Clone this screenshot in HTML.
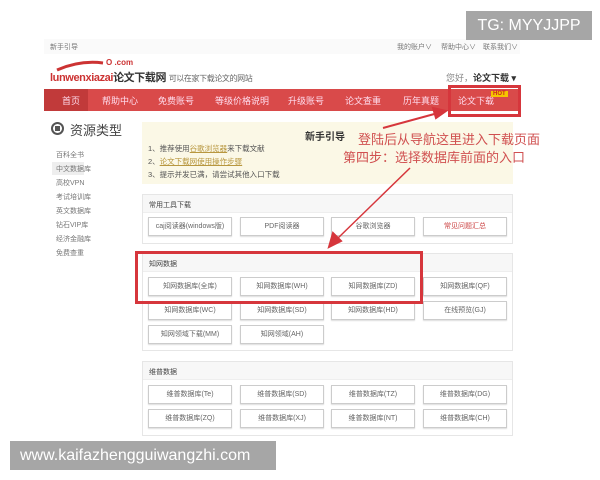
<!DOCTYPE html>
<html><head><meta charset="utf-8"><style>
*{margin:0;padding:0;box-sizing:border-box}
body{width:600px;height:480px;background:#fff;position:relative;overflow:hidden;font-family:"Liberation Sans","Noto Sans CJK SC",sans-serif;color:#555}
.a{position:absolute;white-space:nowrap}
.s{font-size:7px;color:#777}
.nav{position:absolute;left:44px;top:89px;width:476px;height:22px;background:#d94a4a}
.nav span{position:absolute;top:5px;font-size:9px;color:#fde}
.panel{position:absolute;left:142px;width:371px;border:1px solid #e6e6e6;background:#fff}
.ph{height:18px;background:#f7f7f7;border-bottom:1px solid #eee;font-size:7px;color:#444;padding:5px 0 0 6px}
.b{position:absolute;width:84px;height:19px;border:1px solid #ccc;background:#fff;font-size:7px;color:#666;text-align:center;line-height:18px;box-shadow:0 1px 1px #ddd}
.rb{position:absolute;border:3px solid #d6363c}
.side{font-size:7px;color:#777;left:56px}
</style></head><body>
<div class="a" style="left:44px;top:39px;width:476px;height:15px;background:#fafafa"></div>
<div class="a s" style="left:50px;top:42px">新手引导</div>
<div class="a s" style="left:397px;top:42px">我的账户∨</div>
<div class="a s" style="left:441px;top:42px">帮助中心∨</div>
<div class="a s" style="left:483px;top:42px">联系我们∨</div>
<div class="a" style="left:466px;top:11px;width:126px;height:29px;background:#a6a6a6;color:#fff;font-size:16px;line-height:29px;text-align:center">TG: MYYJJPP</div>
<svg class="a" style="left:55px;top:58px" width="70" height="14"><path d="M2 12 Q25 2 48 5" stroke="#c33" stroke-width="3" fill="none"/></svg>
<div class="a" style="left:106px;top:58px;font-size:8px;font-weight:bold;color:#c33">O .com</div>
<div class="a" style="left:50px;top:69px;font-size:11px;font-weight:bold;color:#c33;letter-spacing:-.4px">lunwenxiazai<span style="color:#333">论文下载网</span> <span style="font-weight:normal;color:#666;font-size:8px">可以在家下载论文的网站</span></div>
<div class="a" style="left:446px;top:71px;font-size:9px;color:#888">您好，<b style="color:#333">论文下载 ▾</b></div>
<div class="nav"><div style="position:absolute;left:0;top:0;width:44px;height:22px;background:#c13a3a"></div>
<span style="left:18px">首页</span><span style="left:58px">帮助中心</span><span style="left:114px">免费账号</span><span style="left:171px">等级价格说明</span><span style="left:244px">升级账号</span><span style="left:301px">论文查重</span><span style="left:359px">历年真题</span><span style="left:414px">论文下载</span>
<div style="position:absolute;left:447px;top:2px;background:#f5c500;color:#c22;font-size:6px;font-weight:bold;padding:0 2px">HOT</div></div>
<div class="rb" style="left:448px;top:85px;width:73px;height:32px"></div>
<div class="a" style="left:51px;top:122px;width:13px;height:13px;border:2px solid #555;border-radius:50%"><div style="margin:2px;width:5px;height:5px;background:#555"></div></div>
<div class="a" style="left:70px;top:120px;font-size:13px;color:#444">资源类型</div>
<div class="a" style="left:52px;top:162px;width:32px;height:13px;background:#eee"></div>
<div class="a side" style="top:150px">百科全书</div>
<div class="a side" style="top:164px">中文数据库</div>
<div class="a side" style="top:178px">高校VPN</div>
<div class="a side" style="top:192px">考试培训库</div>
<div class="a side" style="top:206px">英文数据库</div>
<div class="a side" style="top:220px">钻石VIP库</div>
<div class="a side" style="top:234px">经济金融库</div>
<div class="a side" style="top:248px">免费查重</div>
<div class="a" style="left:142px;top:122px;width:371px;height:62px;background:#fbf8e6"></div>
<div class="a" style="left:148px;top:142px;font-size:7.5px;color:#555;line-height:13px">1、推荐使用<u style="color:#b8973f">谷歌浏览器</u>来下载文献<br>2、<u style="color:#b8973f">论文下载网使用操作步骤</u><br>3、提示并发已满，请尝试其他入口下载</div>
<div class="a" style="left:305px;top:128px;font-size:10px;font-weight:bold;color:#333">新手引导</div>
<div class="a" style="left:358px;top:129px;font-size:13px;color:#d05050">登陆后从导航这里进入下载页面</div>
<div class="a" style="left:343px;top:147px;font-size:13px;color:#d05050">第四步：选择数据库前面的入口</div>
<div class="panel" style="top:194px;height:50px"><div class="ph">常用工具下载</div></div>
<div class="b" style="left:148px;top:217px">caj阅读器(windows版)</div>
<div class="b" style="left:240px;top:217px">PDF阅读器</div>
<div class="b" style="left:331px;top:217px">谷歌浏览器</div>
<div class="b" style="left:423px;top:217px;color:#c44">常见问题汇总</div>
<div class="panel" style="top:253px;height:98px"><div class="ph">知网数据</div></div>
<div class="b" style="left:148px;top:277px">知网数据库(全库)</div><div class="b" style="left:240px;top:277px">知网数据库(WH)</div><div class="b" style="left:331px;top:277px">知网数据库(ZD)</div><div class="b" style="left:423px;top:277px">知网数据库(QF)</div>
<div class="b" style="left:148px;top:301px">知网数据库(WC)</div><div class="b" style="left:240px;top:301px">知网数据库(SD)</div><div class="b" style="left:331px;top:301px">知网数据库(HD)</div><div class="b" style="left:423px;top:301px">在线预览(GJ)</div>
<div class="b" style="left:148px;top:325px">知网领域下载(MM)</div><div class="b" style="left:240px;top:325px">知网领域(AH)</div>
<div class="rb" style="left:135px;top:251px;width:288px;height:53px"></div>
<div class="panel" style="top:361px;height:75px"><div class="ph">维普数据</div></div>
<div class="b" style="left:148px;top:385px">维普数据库(Te)</div><div class="b" style="left:240px;top:385px">维普数据库(SD)</div><div class="b" style="left:331px;top:385px">维普数据库(TZ)</div><div class="b" style="left:423px;top:385px">维普数据库(DG)</div>
<div class="b" style="left:148px;top:409px">维普数据库(ZQ)</div><div class="b" style="left:240px;top:409px">维普数据库(XJ)</div><div class="b" style="left:331px;top:409px">维普数据库(NT)</div><div class="b" style="left:423px;top:409px">维普数据库(CH)</div>
<svg class="a" style="left:0;top:0" width="600" height="480"><g stroke="#d6363c" stroke-width="2" fill="#d6363c"><line x1="383" y1="128" x2="438" y2="113"/><path d="M446 111 L433 108 L436 118Z"/><line x1="410" y1="168" x2="336" y2="240" stroke-width="1.5"/><path d="M329 247 L333 233 L341 241Z"/></g></svg>
<div class="a" style="left:10px;top:441px;width:266px;height:29px;background:#a6a6a6;color:#fff;font-size:16px;line-height:29px;padding-left:10px">www.kaifazhengguiwangzhi.com</div>
</body></html>
